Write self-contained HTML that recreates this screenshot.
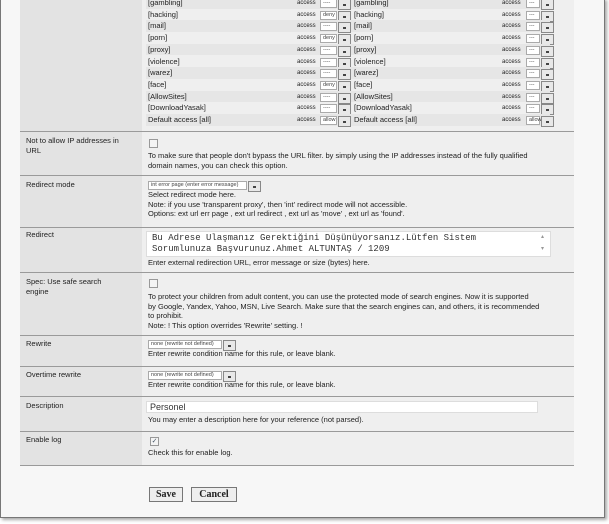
<!DOCTYPE html>
<html><head><meta charset="utf-8"><style>
*{margin:0;padding:0;box-sizing:border-box}
body{width:609px;height:524px;background:#fff;position:relative;overflow:hidden;font-family:"Liberation Sans",sans-serif;font-size:7.5px;color:#222}
.frame{position:absolute;left:0;top:-2px;width:605px;height:520px;border:1px solid #777;border-top:none;background:#f7f7f7;box-shadow:2px 2px 3px #aaa}
.lab{position:absolute;left:20px;width:122px;background:#e3e3e3}
.val{position:absolute;left:142px;width:432px;background:#efefef}
.hl{position:absolute;left:20px;width:554px;height:1px;background:#9a9a9a}
.t{position:absolute;white-space:nowrap;line-height:9.5px}
.stripe{position:absolute;left:146px;width:404px;height:11.7px}
.sel{position:absolute;height:9px;border:1px solid #aaa;background:#fff;font-size:5.5px;line-height:7px;padding-left:2px;color:#444;white-space:nowrap}
.sel:after{content:"";position:absolute;left:100%;margin-left:2px;top:-1px;width:11px;height:9px;border:1px solid #888;background:#e8e8e8 linear-gradient(#444,#444) no-repeat 4px 4px/3px 2px}
.cb{position:absolute;width:9px;height:9px;border:1px solid #999;background:#f4f4f4}
.btn{position:absolute;height:15px;border:1px solid #777;background:#eee;font-family:"Liberation Serif",serif;font-weight:bold;font-size:10px;line-height:13px;text-align:center}
</style></head><body>
<div class="frame"></div>
<div class="lab" style="top:0;height:465px"></div>
<div class="val" style="top:0;height:465px"></div>
<div id="list"></div>
<div class="hl" style="top:131px"></div>
<div class="hl" style="top:175px"></div>
<div class="hl" style="top:227px"></div>
<div class="hl" style="top:272px"></div>
<div class="hl" style="top:335px"></div>
<div class="hl" style="top:366px"></div>
<div class="hl" style="top:396px"></div>
<div class="hl" style="top:431px"></div>
<div class="hl" style="top:465px"></div>

<div class="t" style="left:26px;top:136px">Not to allow IP addresses in<br>URL</div>
<div class="cb" style="left:149px;top:139px"></div>
<div class="t" style="left:148px;top:151px">To make sure that people don't bypass the URL filter. by simply using the IP addresses instead of the fully qualified<br>domain names, you can check this option.</div>

<div class="t" style="left:26px;top:180px">Redirect mode</div>
<div class="sel" style="left:148px;top:181px;width:99px">int error page (enter error message)</div>
<div class="t" style="left:148px;top:190px">Select redirect mode here.<br>Note: if you use 'transparent proxy', then 'int' redirect mode will not accessible.<br>Options: ext url err page , ext url redirect , ext url as 'move' , ext url as 'found'.</div>

<div class="t" style="left:26px;top:230px">Redirect</div>
<div style="position:absolute;left:146px;top:231px;width:405px;height:26px;background:#fff;border:1px solid #ddd"></div>
<div class="t" style="left:152px;top:233px;font-family:'Liberation Mono',monospace;font-size:9px;line-height:11px;color:#333">Bu Adrese Ulaşmanız Gerektiğini Düşünüyorsanız.Lütfen Sistem<br>Sorumlunuza Başvurunuz.Ahmet ALTUNTAŞ / 1209</div>
<div class="t" style="left:541px;top:233px;color:#999;font-size:6px">▴</div>
<div class="t" style="left:541px;top:245px;color:#999;font-size:6px">▾</div>
<div class="t" style="left:148px;top:258px">Enter external redirection URL, error message or size (bytes) here.</div>

<div class="t" style="left:26px;top:277px">Spec: Use safe search<br>engine</div>
<div class="cb" style="left:149px;top:279px"></div>
<div class="t" style="left:148px;top:292px">To protect your children from adult content, you can use the protected mode of search engines. Now it is supported<br>by Google, Yandex, Yahoo, MSN, Live Search. Make sure that the search engines can, and others, it is recommended<br>to prohibit.<br>Note: ! This option overrides 'Rewrite' setting. !</div>

<div class="t" style="left:26px;top:339px">Rewrite</div>
<div class="sel" style="left:148px;top:340px;width:74px">none (rewrite not defined)</div>
<div class="t" style="left:148px;top:349px">Enter rewrite condition name for this rule, or leave blank.</div>

<div class="t" style="left:26px;top:370px">Overtime rewrite</div>
<div class="sel" style="left:148px;top:371px;width:74px">none (rewrite not defined)</div>
<div class="t" style="left:148px;top:380px">Enter rewrite condition name for this rule, or leave blank.</div>

<div class="t" style="left:26px;top:401px">Description</div>
<div style="position:absolute;left:146px;top:401px;width:392px;height:12px;background:#fff;border:1px solid #ddd"></div>
<div class="t" style="left:150px;top:402px;font-size:9px;line-height:11px;color:#333">Personel</div>
<div class="t" style="left:148px;top:415px">You may enter a description here for your reference (not parsed).</div>

<div class="t" style="left:26px;top:435px">Enable log</div>
<div class="cb" style="left:150px;top:437px;font-size:7px;line-height:7px;text-align:center;color:#456">✓</div>
<div class="t" style="left:148px;top:448px">Check this for enable log.</div>

<div class="btn" style="left:149px;top:487px;width:34px">Save</div>
<div class="btn" style="left:191px;top:487px;width:46px">Cancel</div>

<script>
var n=["[gambling]","[hacking]","[mail]","[porn]","[proxy]","[violence]","[warez]","[face]","[AllowSites]","[DownloadYasak]","Default access [all]"];
var v1=["----","deny","----","deny","----","----","----","deny","----","----","allow"];
var h="";
for(var i=0;i<11;i++){var y=-3+i*11.7;
 if(i%2==0)h+='<div class="stripe" style="top:'+y+'px;background:#e6e6e6"></div>';
 var ty=y+1;
 h+='<div class="t" style="left:148px;top:'+ty+'px">'+n[i]+'</div>';
 h+='<div class="t" style="left:297px;top:'+(ty+1)+'px;font-size:6px;line-height:9px">access</div>';
 h+='<div class="sel" style="left:320px;top:'+(y+2)+'px;width:17px">'+v1[i]+'</div>';
 h+='<div class="t" style="left:354px;top:'+ty+'px">'+n[i]+'</div>';
 h+='<div class="t" style="left:502px;top:'+(ty+1)+'px;font-size:6px;line-height:9px">access</div>';
 h+='<div class="sel" style="left:526px;top:'+(y+2)+'px;width:14px">'+(i==10?'allow':'---')+'</div>';
}
document.getElementById("list").innerHTML=h;
</script>
</body></html>
